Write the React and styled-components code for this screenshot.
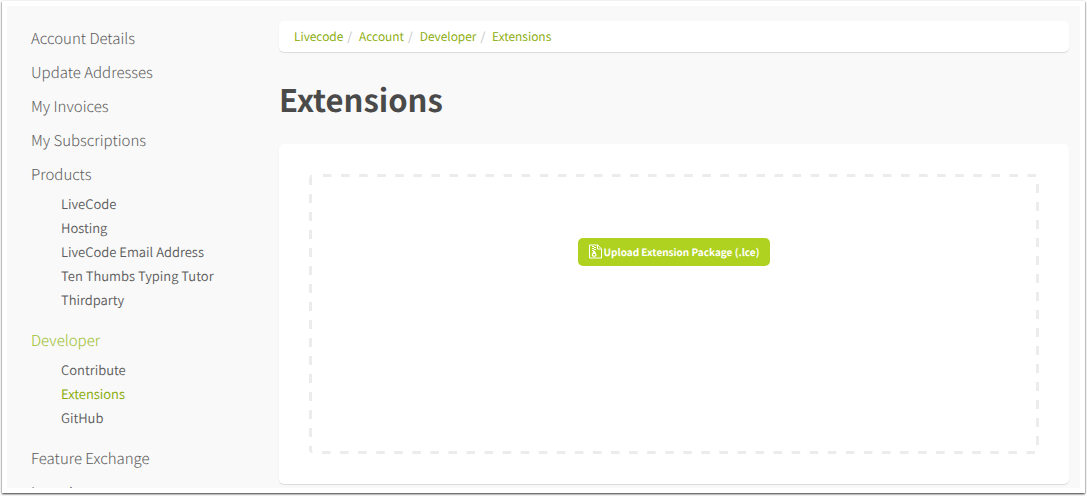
import React from "react";
import styled, { createGlobalStyle } from "styled-components";

const GlobalStyle = createGlobalStyle`
  *, *::before, *::after { box-sizing: border-box; }
  body {
    margin: 0;
    background: #fff;
    color: #6b6b6b;
    font-family: "Noto Sans CJK SC", "Noto Sans", sans-serif;
    text-rendering: geometricPrecision;
  }
  ul, ol { list-style: none; margin: 0; padding: 0; }
  a { color: inherit; text-decoration: none; }
`;

const Frame = styled.div`
  height: 100vh;
  padding: 1px 2px 3px;
  overflow: hidden;
`;

const Sheet = styled.div`
  height: 100%;
  padding: 5px;
  background: #fff;
  box-shadow: 0 1px 2px rgba(0, 0, 0, 0.8);
`;

const Page = styled.div`
  display: flex;
  height: 100%;
  padding: 0 11px 0 24px;
  overflow: hidden;
  background: #f9f9f9;
`;

const Sidebar = styled.nav`
  flex: 0 0 248px;
  padding-top: 16px;
`;

const Section = styled.li`
  font-size: 15px;
  font-weight: 300;
  line-height: 34px;
  color: ${(p) => (p.$active ? "#9cc02c" : "#5c5c5c")};
  > a { display: block; }
`;

const SubMenu = styled.ul`
  padding: 0 0 12px 30px;
`;

const SubItem = styled.li`
  font-size: 13px;
  font-weight: 350;
  line-height: 24px;
  color: ${(p) => (p.$active ? "#86a900" : "#5c5c5c")};
`;

const Main = styled.main`
  flex: 1;
  min-width: 0;
  padding-top: 15px;
`;

const Card = styled.div`
  background: #fff;
  border-radius: 5px;
  box-shadow: 0 1px 1px rgba(0, 0, 0, 0.12);
`;

const Breadcrumb = styled(Card).attrs({ as: "ol" })`
  display: flex;
  padding: 0 15px;
  font-size: 12px;
  font-weight: 350;
  line-height: 31px;
`;

const Crumb = styled.li`
  color: #86a900;
  & + &::before {
    content: "/";
    padding: 0 7px 0 4px;
    color: #bbb;
  }
`;

const Title = styled.h1`
  margin: 25px 0 23px;
  font-size: 31px;
  font-weight: 700;
  line-height: 44px;
  color: #4a4a4a;
`;

const Panel = styled(Card)`
  padding: 30px;
`;

const DropZone = styled.div`
  display: flex;
  justify-content: center;
  align-items: flex-start;
  min-height: 280px;
  padding-top: 64px;
  border-radius: 5px;
  background:
    linear-gradient(#fff, #fff) 3px 0 / 10px 3px no-repeat,
    linear-gradient(90deg, #ececec 50%, transparent 50%) 14px 0 / calc((100% - 7px) / 40) 3px repeat-x,
    linear-gradient(90deg, #ececec 50%, transparent 50%) 13px 100% / calc((100% - 7px) / 40) 3px repeat-x,
    linear-gradient(#ececec 50%, transparent 50%) 0 2px / 3px 18px repeat-y,
    linear-gradient(#ececec 50%, transparent 50%) 100% 10px / 3px 18px repeat-y;
`;

const UploadButton = styled.button`
  display: flex;
  align-items: center;
  gap: 2px;
  height: 28px;
  padding: 0 11px;
  border: 0;
  border-radius: 5px;
  background: #afd220;
  color: #fff;
  font: 700 10px/28px "Noto Sans CJK SC", "Noto Sans", sans-serif;
  text-rendering: inherit;
`;

const ArchiveIcon = () => (
  <svg width="13" height="16" viewBox="0 0 13 16" fill="none" aria-hidden="true">
    <path d="M.5 1h8.200l3.800 3.800v9.200h-12z M8.500 1v4h4" stroke="#fff" />
    <path d="M3 2h2v1H3z M5 3h2v1H5z M3 4h2v1H3z M5 5h2v1H5z M3 6h2v1H3z" fill="#fff" />
    <path d="M4.200 7h1.800l1.500 3.800c.3 1.200-.7 1.900-2.300 1.900s-2.700-.7-2.400-1.900z M4.200 10v1.500h2v-1.500z" fill="#fff" fillRule="evenodd" />
  </svg>
);

const menu = [
  { label: "Account Details" },
  { label: "Update Addresses" },
  { label: "My Invoices" },
  { label: "My Subscriptions" },
  {
    label: "Products",
    items: ["LiveCode", "Hosting", "LiveCode Email Address", "Ten Thumbs Typing Tutor", "Thirdparty"],
  },
  { label: "Developer", active: true, items: ["Contribute", "Extensions", "GitHub"] },
  { label: "Feature Exchange" },
  { label: "Learning" },
];

const crumbs = ["Livecode", "Account", "Developer", "Extensions"];

export default function App() {
  return (
    <Frame>
      <GlobalStyle />
      <Sheet>
        <Page>
          <Sidebar aria-label="Account">
            <ul>
              {menu.map((section) => (
                <Section key={section.label} $active={section.active}>
                  <a href="#">{section.label}</a>
                  {section.items && (
                    <SubMenu>
                      {section.items.map((item) => (
                        <SubItem key={item} $active={item === "Extensions"}>
                          <a href="#">{item}</a>
                        </SubItem>
                      ))}
                    </SubMenu>
                  )}
                </Section>
              ))}
            </ul>
          </Sidebar>
          <Main>
            <Breadcrumb aria-label="Breadcrumb">
              {crumbs.map((crumb) => (
                <Crumb key={crumb}>
                  <a href="#">{crumb}</a>
                </Crumb>
              ))}
            </Breadcrumb>
            <Title>Extensions</Title>
            <Panel>
              <DropZone>
                <UploadButton type="button">
                  <ArchiveIcon />
                  Upload Extension Package (.lce)
                </UploadButton>
              </DropZone>
            </Panel>
          </Main>
        </Page>
      </Sheet>
    </Frame>
  );
}
